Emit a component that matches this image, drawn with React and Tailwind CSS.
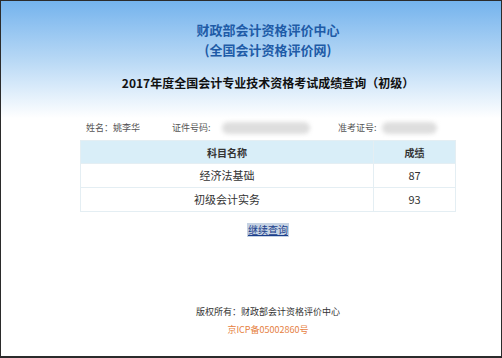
// App.jsx — score query result page
const rows = [
  { name: '经济法基础', score: 87 },
  { name: '初级会计实务', score: 93 },
];

export default function App() {
  return (
    <div className="w-[502px] h-[358px] box-border border border-b-2 border-[#2b2b2b] overflow-hidden font-['Noto_Sans_CJK_SC',sans-serif]">
      <div className="h-full bg-linear-to-b from-[#74b3ed] via-[#b9d9f5] via-[17%] to-white to-[33%] pl-[34px] text-center">
        <div className="pt-[19px] text-[13px] leading-[20px] font-bold text-[#1e5ba7]">财政部会计资格评价中心</div>
        <div className="text-[13px] leading-[20px] font-bold text-[#1e5ba7]">(全国会计资格评价网)</div>
        <div className="mt-[13px] text-[12px] leading-[20px] font-bold text-[#111]">
          2017年度全国会计专业技术资格考试成绩查询（初级）
        </div>

        <div className="mt-[27px] mx-auto w-[376px] flex items-center h-[16px] text-[9px] text-[#555] pl-[6px]">
          <span className="w-[86px] text-left">姓名：姚李华</span>
          <span className="w-[50px] text-left">证件号码:</span>
          <span className="w-[88px] h-[12px] rounded-full bg-[#dedede] blur-[2px]" />
          <span className="ml-[28px] w-[44px] text-left">准考证号:</span>
          <span className="w-[55px] h-[12px] rounded-full bg-[#dedede] blur-[2px]" />
        </div>

        <table className="mt-[4px] mx-auto w-[376px] border-collapse text-[#333]">
          <thead>
            <tr className="h-[23px] bg-[#d9eef8]">
              <th className="w-[293px] border border-[#e4eef3] text-[10px] font-bold">科目名称</th>
              <th className="border border-[#e4eef3] text-[10px] font-bold">成绩</th>
            </tr>
          </thead>
          <tbody>
            {rows.map(r => (
              <tr key={r.name} className="h-[24px] bg-white">
                <td className="border border-[#e4eef3] text-[11px]">{r.name}</td>
                <td className="border border-[#e4eef3] text-[11px]">{r.score}</td>
              </tr>
            ))}
          </tbody>
        </table>

        <div className="mt-[11px] h-[14px] flex justify-center">
          <a className="px-[1px] bg-[#c5d2e3] text-[10px] leading-[14px] text-[#1b3f8c] underline">继续查询</a>
        </div>

        <div className="mt-[67px] text-[9px] leading-[16px] text-[#333]">版权所有：财政部会计资格评价中心</div>
        <div className="mt-[2px] text-[9px] leading-[16px] text-[#e6813f]">京ICP备05002860号</div>
      </div>
    </div>
  );
}
